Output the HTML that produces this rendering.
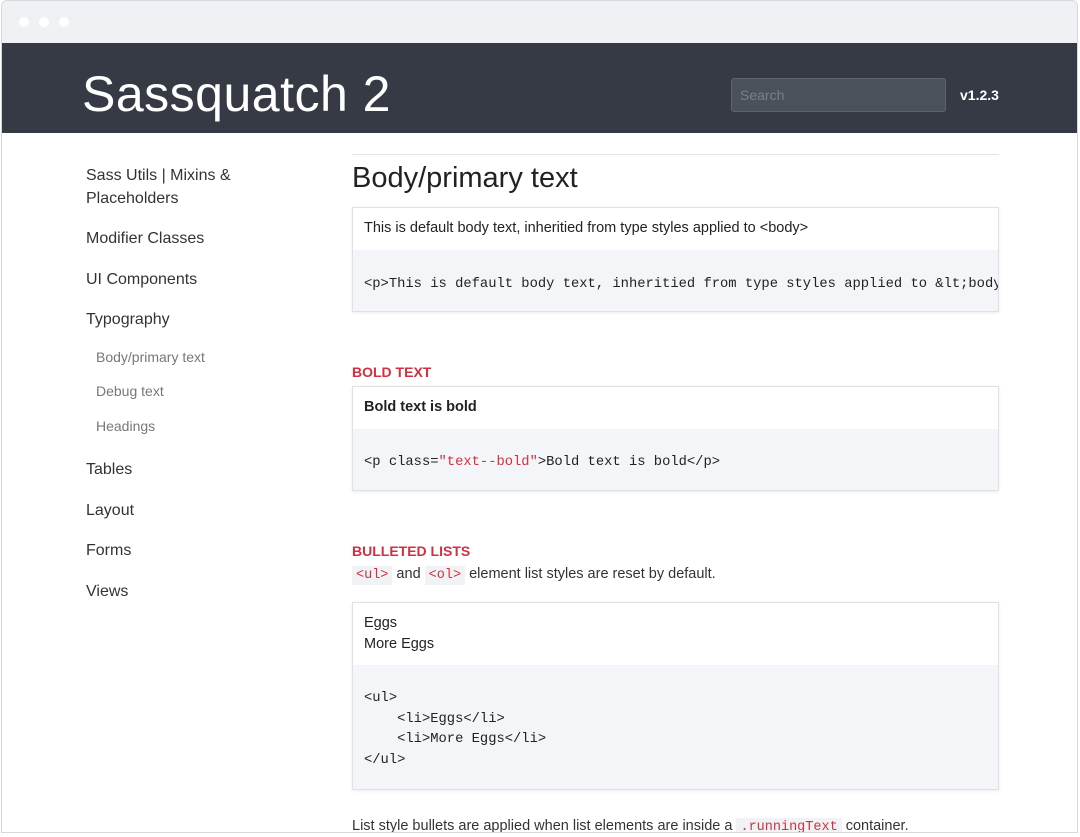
<!DOCTYPE html>
<html><head><meta charset="utf-8"><style>
*{margin:0;padding:0;box-sizing:border-box}
body{width:1080px;height:837px;background:#fff;position:relative;overflow:hidden;font-family:"Liberation Sans",sans-serif;color:#222}
.frame{position:absolute;left:1px;top:0;width:1077px;height:833px;border:1px solid #d6d8dd;border-radius:6px 6px 0 0;overflow:hidden;background:#fff}
.top{position:absolute;left:0;top:0;right:0;height:43px;background:#f0f1f5}
.dot{position:absolute;top:16px;width:10px;height:10px;border-radius:50%;background:#fff}
.hdr{position:absolute;left:0;top:42px;right:0;height:90px;background:#353a45}
.logo{position:absolute;left:80px;top:22px;font-size:50px;color:#fff;font-weight:300;letter-spacing:0.5px}
.search{position:absolute;left:729px;top:35px;width:215px;height:34px;background:#4b515b;border:1px solid #5e646d;border-radius:3px;color:#79808a;font-size:14px;padding:8px 8px}
.ver{position:absolute;left:958px;top:44px;color:#fff;font-weight:bold;font-size:14px}
.a{position:absolute}
.nav{font-size:16px;color:#333;line-height:23px}
.sub{font-size:14px;color:#777}
.card{position:absolute;left:350px;width:647px;border:1px solid #dfe1e5;box-shadow:0 1px 3px rgba(0,0,0,.08);background:#f3f5f8}
.card .t{background:#fff;padding:0 11px;font-size:14.5px;color:#222}
.card .c{padding:0 11px;font-family:"Liberation Mono",monospace;font-size:13.8px;color:#222;white-space:pre;overflow:hidden}
.red{color:#d23040}
.h{font-size:14px;font-weight:bold;color:#d23040}
.code{background:#f0f2f5;font-family:"Liberation Mono",monospace;font-size:13.5px;color:#d23040;padding:2px 4px}
</style></head><body>
<div class="frame">
<div class="top"><div class="dot" style="left:17px"></div><div class="dot" style="left:37px"></div><div class="dot" style="left:57px"></div></div>
<div class="hdr"><div class="logo">Sassquatch 2</div><div class="search">Search</div><div class="ver">v1.2.3</div></div>
<div class="a nav" style="left:84px;top:163px">Sass Utils | Mixins &amp;<br>Placeholders</div>
<div class="a nav" style="left:84px;top:226px">Modifier Classes</div>
<div class="a nav" style="left:84px;top:267px">UI Components</div>
<div class="a nav" style="left:84px;top:307px">Typography</div>
<div class="a sub" style="left:94px;top:348px">Body/primary text</div>
<div class="a sub" style="left:94px;top:382px">Debug text</div>
<div class="a sub" style="left:94px;top:417px">Headings</div>
<div class="a nav" style="left:84px;top:457px">Tables</div>
<div class="a nav" style="left:84px;top:498px">Layout</div>
<div class="a nav" style="left:84px;top:538px">Forms</div>
<div class="a nav" style="left:84px;top:579px">Views</div>
<div class="a" style="left:350px;top:153px;width:647px;border-top:1px solid #e3e5e8"></div>
<div class="a" style="left:350px;top:161px;font-size:29px;color:#222">Body/primary text</div>
<div class="card" style="top:206px;height:105px"><div class="t" style="height:42px;line-height:40px">This is default body text, inheritied from type styles applied to &lt;body&gt;</div><div class="c" style="line-height:70px">&lt;p&gt;This is default body text, inheritied from type styles applied to &amp;lt;body</div></div>
<div class="a h" style="left:350px;top:363px">BOLD TEXT</div>
<div class="card" style="top:385px;height:105px"><div class="t" style="height:42px;line-height:40px;font-weight:bold">Bold text is bold</div><div class="c" style="line-height:68px">&lt;p class=<span class="red">"text--bold"</span>&gt;Bold text is bold&lt;/p&gt;</div></div>
<div class="a h" style="left:350px;top:542px">BULLETED LISTS</div>
<div class="a" style="left:350px;top:565px;font-size:14.5px;color:#333"><span class="code">&lt;ul&gt;</span> and <span class="code">&lt;ol&gt;</span> element list styles are reset by default.</div>
<div class="card" style="top:601px;height:188px"><div class="t" style="height:62px;padding-top:10px;line-height:21px">Eggs<br>More Eggs</div><div class="c" style="padding-top:24px;line-height:20.5px">&lt;ul&gt;
    &lt;li&gt;Eggs&lt;/li&gt;
    &lt;li&gt;More Eggs&lt;/li&gt;
&lt;/ul&gt;</div></div>
<div class="a" style="left:350px;top:817px;font-size:14.5px;color:#333">List style bullets are applied when list elements are inside a <span class="code">.runningText</span> container.</div>
</div>
</body></html>
